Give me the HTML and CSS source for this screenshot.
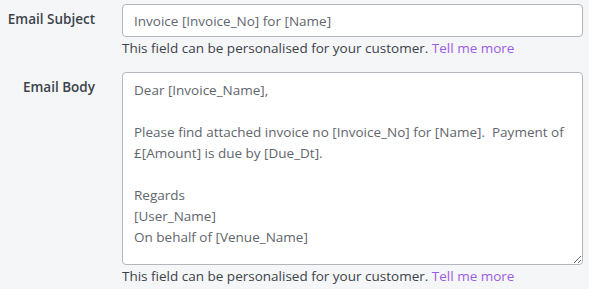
FILE: index.html
```html
<!DOCTYPE html>
<html lang="en">
<head>
  <meta charset="UTF-8">
  <title>Email Settings</title>
  <link rel="stylesheet" href="styles.css">
</head>
<body>

  <form class="email-form">
    <div class="row">
      <label class="row-label" for="subject">Email Subject</label>
      <div class="field">
        <input type="text" id="subject" class="text-input" value="Invoice [Invoice_No] for [Name]">
        <p class="hint">This field can be personalised for your customer. <a href="#">Tell me more</a></p>
      </div>
    </div>

    <div class="row">
      <label class="row-label" for="body">Email Body</label>
      <div class="field">
        <textarea id="body" class="text-area">Dear [Invoice_Name],

Please find attached invoice no [Invoice_No] for [Name].  Payment of £[Amount] is due by [Due_Dt].

Regards
[User_Name]
On behalf of [Venue_Name]</textarea>
        <p class="hint">This field can be personalised for your customer. <a href="#">Tell me more</a></p>
      </div>
    </div>
  </form>

</body>
</html>
```

FILE: styles.css
```css
body {
  margin: 0;
  background: #f5f6f8;
  font-family: 'Open Sans', sans-serif;
  font-size: 13.5px;
  color: #3c434a;
}

.email-form {
  padding: 4px 6px 0 0;
}

.row {
  display: flex;
  align-items: flex-start;
  margin-bottom: 14px;
}

.row-label {
  width: 95px;
  flex: none;
  text-align: right;
  font-weight: 600;
  padding-top: 6px;
  margin-right: 27px;
}

.field {
  flex: 1;
}

.text-input,
.text-area {
  display: block;
  width: 100%;
  box-sizing: border-box;
  border: 1px solid #b3b7bb;
  border-radius: 4px;
  background: #fff;
  font-family: inherit;
  font-size: 13.5px;
  color: #5f666d;
  padding: 0 11px;
}

.text-input {
  height: 33px;
}

.text-area {
  height: 193px;
  padding-top: 7px;
  line-height: 21px;
  resize: vertical;
}

.hint {
  margin: 1px 0 0;
  line-height: 20px;
}

.hint a {
  color: #9b5de5;
  text-decoration: none;
}
```
